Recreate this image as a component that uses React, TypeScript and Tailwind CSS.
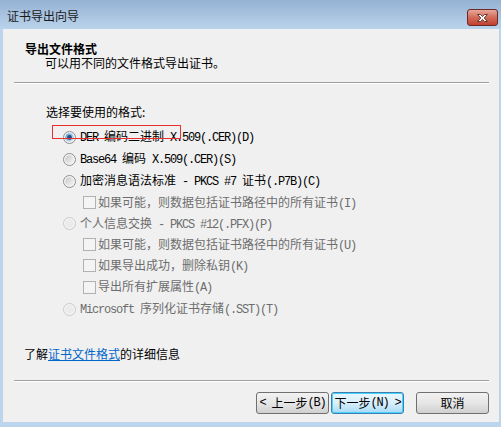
import React from 'react';

const cjk = "font-['Noto_Sans_CJK_SC',sans-serif]";

// ASCII runs drawn in a narrow mono face, the rest in the CJK face
function Mixed({ text }: { text: string }) {
  const parts = text.match(/[\x00-\x7f]+|[^\x00-\x7f]+/g) || [];
  return (
    <>
      {parts.map((p, i) =>
        /^[\x00-\x7f]+$/.test(p) ? (
          <span
            key={i}
            className="font-['Liberation_Mono',monospace] text-[12px] tracking-[-1.2px] whitespace-pre"
          >
            {p}
          </span>
        ) : (
          <span key={i}>{p}</span>
        )
      )}
    </>
  );
}

function Radio({ checked, disabled }: { checked?: boolean; disabled?: boolean }) {
  return (
    <svg width="13" height="13" viewBox="0 0 13 13" className="shrink-0">
      <defs>
        <linearGradient id="rOff" x1="0" y1="0" x2="1" y2="1">
          <stop offset="0" stopColor="#c8c8c8" />
          <stop offset="1" stopColor="#f6f6f6" />
        </linearGradient>
        <linearGradient id="rOn" x1="0" y1="0" x2="1" y2="1">
          <stop offset="0" stopColor="#5f9bd0" />
          <stop offset="1" stopColor="#d6ecfb" />
        </linearGradient>
      </defs>
      <circle cx="6.5" cy="6.5" r="6" fill="#f4f4f4" stroke={disabled ? '#c9c9c9' : '#8e8f8f'} />
      {!disabled && <circle cx="6.5" cy="6.5" r="4.3" fill={checked ? 'url(#rOn)' : 'url(#rOff)'} />}
      {disabled && <circle cx="6.5" cy="6.5" r="4.3" fill="#ebebeb" />}
      {checked && <circle cx="6.5" cy="6.5" r="2.4" fill="#1c4f85" />}
    </svg>
  );
}

function Check() {
  return <span className="w-[13px] h-[13px] shrink-0 border border-[#b1b1b1] bg-[#f4f4f4]" />;
}

function RadioRow({ label, h, checked, disabled }: { label: string; h: string; checked?: boolean; disabled?: boolean }) {
  return (
    <div className={`flex items-center gap-[4px] pl-[60px] ${h}`}>
      <Radio checked={checked} disabled={disabled} />
      <span className={`text-[12px] leading-[14px] ${disabled ? 'text-[#6d6d6d]' : 'text-black'}`}>
        <Mixed text={label} />
      </span>
    </div>
  );
}

function CheckRow({ label, h }: { label: string; h: string }) {
  return (
    <div className={`flex items-center gap-[2px] pl-[80px] ${h}`}>
      <Check />
      <span className="text-[12px] leading-[14px] text-[#6d6d6d]">
        <Mixed text={label} />
      </span>
    </div>
  );
}

export default function App() {
  return (
    <div className={`w-[501px] h-[427px] bg-[#bcd4ec] flex flex-col overflow-hidden ${cjk}`}>
      {/* title bar */}
      <div className="h-[29px] shrink-0 flex items-start justify-between bg-gradient-to-b from-[#96b2d3] to-[#bad3ec] pl-[7px] pr-[3px]">
        <span className="mt-[8px] text-[12px] leading-[16px] text-[#1a1a1a]">证书导出向导</span>
        <div className="mt-[9px] w-[31px] h-[17px] rounded-[3px] border border-[#6b2a25] bg-gradient-to-b from-[#e6a89b] via-[#d26a58] to-[#c0402f] flex items-center justify-center">
          <svg width="13" height="10" viewBox="0 0 13 10">
            <path
              d="M1.5 1.5 L4.5 1.5 L6.5 3.6 L8.5 1.5 L11.5 1.5 L8.2 5 L11.5 8.5 L8.5 8.5 L6.5 6.4 L4.5 8.5 L1.5 8.5 L4.8 5 Z"
              fill="#ffffff"
              stroke="#5a2a26"
              strokeWidth="0.9"
              strokeLinejoin="round"
            />
          </svg>
        </div>
      </div>

      {/* client area */}
      <div className="relative flex-1 ml-[3px] mr-[2px] mb-[5px] bg-[#f0f0f0] flex flex-col">
        <div className="pt-[13px] pl-[22px] text-[12px] text-black">
          <div className="h-[14px] leading-[14px] font-bold">导出文件格式</div>
          <div className="h-[14px] leading-[14px] pl-[20px]">可以用不同的文件格式导出证书。</div>
        </div>

        <div className="mt-[12px] ml-[11px] mr-[10px] border-t border-[#a0a0a0] border-b border-b-white" />

        <div className="mt-[20px] pl-[43px] text-[12px] leading-[16px] text-black">选择要使用的格式:</div>

        <div className="mt-[6px] flex flex-col">
          <RadioRow h="h-[22px]" checked label="DER 编码二进制 X.509(.CER)(D)" />
          <RadioRow h="h-[22px]" label="Base64 编码 X.509(.CER)(S)" />
          <RadioRow h="h-[22px]" label="加密消息语法标准 - PKCS #7 证书(.P7B)(C)" />
          <CheckRow h="h-[21px]" label="如果可能，则数据包括证书路径中的所有证书(I)" />
          <RadioRow h="h-[21px]" disabled label="个人信息交换 - PKCS #12(.PFX)(P)" />
          <CheckRow h="h-[21px]" label="如果可能，则数据包括证书路径中的所有证书(U)" />
          <CheckRow h="h-[21px]" label="如果导出成功，删除私钥(K)" />
          <CheckRow h="h-[22px]" label="导出所有扩展属性(A)" />
          <RadioRow h="h-[22px]" disabled label="Microsoft 序列化证书存储(.SST)(T)" />
        </div>

        <div className="mt-[26px] pl-[21px] text-[12px] leading-[16px] text-black">
          了解<span className="text-[#0066cc] underline">证书文件格式</span>的详细信息
        </div>

        <div className="mt-[18px] ml-[11px] mr-[10px] border-t border-[#a0a0a0] border-b border-b-white" />

        <div className="mt-[10px] mr-[10px] flex justify-end items-center">
          <button className="w-[73px] h-[22px] rounded-[3px] border border-[#707070] bg-gradient-to-b from-[#f2f2f2] via-[#e6e6e6] to-[#d0d0d0] text-[12px] leading-[14px] text-black flex items-center justify-center">
            <Mixed text="< 上一步(B)" />
          </button>
          <button className="ml-[2px] w-[73px] h-[22px] rounded-[3px] border border-[#3c7fb1] shadow-[inset_0_0_0_1px_#48d2fd] bg-gradient-to-b from-[#eaf6fd] via-[#d9f0fc] to-[#a7d9f5] text-[12px] leading-[14px] text-black flex items-center justify-center">
            <Mixed text="下一步(N) >" />
          </button>
          <button className="ml-[12px] w-[73px] h-[22px] rounded-[3px] border border-[#707070] bg-gradient-to-b from-[#f2f2f2] via-[#e6e6e6] to-[#d0d0d0] text-[12px] leading-[14px] text-black flex items-center justify-center">
            取消
          </button>
        </div>

        {/* red annotation box */}
        <div className="absolute left-[49px] top-[96px] w-[129px] h-[14px] border border-[#e8302e]" />
      </div>
    </div>
  );
}
